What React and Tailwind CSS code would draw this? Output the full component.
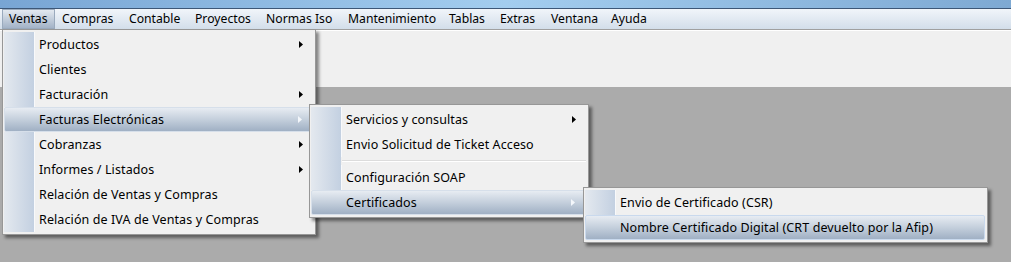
import React from "react";

const FONT = { fontFamily: '"Noto Sans", "Open Sans", sans-serif' };

function Arrow({ light }) {
  return (
    <svg width="4" height="7" viewBox="0 0 4 7" className="shrink-0">
      <path d="M0 0 L4 3.5 L0 7 Z" fill={light ? "#f4f7fb" : "#000"} />
    </svg>
  );
}

function Item({ label, arrow, hi, boxed }) {
  if (hi) {
    return (
      <div
        className={
          "relative flex h-[25px] items-center rounded-[2px] bg-gradient-to-b from-[#e7ecf2] via-[#c4cfdc] to-[#a0b0c4] " +
          (boxed ? "border border-[#c9d9ed]" : "border border-[#d6dfea]")
        }
      >
        <div className="w-[34px] shrink-0" />
        <span className="flex-1 whitespace-nowrap pt-[2px] text-black">{label}</span>
        <div className="flex w-[14px] shrink-0 justify-start">{arrow && <Arrow light />}</div>
      </div>
    );
  }
  return (
    <div className="flex h-[25px] items-center">
      <div className="h-full w-[30px] shrink-0 bg-gradient-to-r from-[#e4e9ef] to-[#c3d0e1]" />
      <div className="h-full w-px shrink-0 bg-[#f8f9fb]" />
      <div className="w-[4px] shrink-0" />
      <span className="flex-1 whitespace-nowrap pt-[2px] text-black">{label}</span>
      <div className="flex w-[14px] shrink-0 justify-start">{arrow && <Arrow />}</div>
    </div>
  );
}

function Separator() {
  return (
    <div className="flex h-[8px] items-stretch">
      <div className="h-full w-[30px] shrink-0 bg-gradient-to-r from-[#e4e9ef] to-[#c3d0e1]" />
      <div className="flex flex-1 flex-col justify-center pl-[1px]">
        <div className="h-px bg-[#dcdcdc]" />
        <div className="h-px bg-white" />
      </div>
    </div>
  );
}

function Menu({ className, children }) {
  return (
    <div
      className={
        "absolute border border-[#979797] bg-[#f0f0f0] p-[2px] pl-[1px] text-[12.5px] tracking-[0.1px] shadow-[3px_3px_3px_rgba(0,0,0,0.45)] " +
        className
      }
    >
      {children}
    </div>
  );
}

const bar = [
  ["Ventas", 53],
  ["Compras", 67],
  ["Contable", 66],
  ["Proyectos", 71],
  ["Normas Iso", 82],
  ["Mantenimiento", 101],
  ["Tablas", 51],
  ["Extras", 51],
  ["Ventana", 60],
  ["Ayuda", 60],
];

const widthClass = {
  53: "w-[53px]",
  67: "w-[67px]",
  66: "w-[66px]",
  71: "w-[71px]",
  82: "w-[82px]",
  101: "w-[101px]",
  51: "w-[51px]",
  60: "w-[60px]",
};

export default function App() {
  return (
    <div className="relative h-[262px] w-[1011px] overflow-hidden bg-[#ababab] text-[12px]" style={FONT}>
      {/* title strip */}
      <div className="h-[8px] bg-gradient-to-r from-[#78a5d4] via-[#a3cdef] to-[#7ea9d3]" />
      <div className="h-px bg-[#3d5777]" />
      {/* menu bar */}
      <div className="flex h-[20px] items-stretch bg-gradient-to-b from-[#f1f5fa] to-[#d3deea] pl-[2px] text-[12.2px]">
        {bar.map(([t, w], i) => (
          <div
            key={t}
            className={
              widthClass[w] +
              " flex items-center pl-[6px] pt-[1px] text-black " +
              (i === 0
                ? "mr-px border border-[#9aaabd] bg-gradient-to-b from-[#e3e9f0] to-[#a3b3c7] pl-[5px]"
                : "")
            }
          >
            {t}
          </div>
        ))}
      </div>
      <div className="h-px bg-[#a0a0a0]" />
      <div className="h-px bg-white" />
      {/* toolbar area */}
      <div className="h-[56px] bg-[#f0f0f0]" />

      {/* Ventas dropdown */}
      <Menu className="left-[2px] top-[29px] w-[314px]">
        <Item label="Productos" arrow />
        <Item label="Clientes" />
        <Item label="Facturación" arrow />
        <Item label="Facturas Electrónicas" arrow hi />
        <Item label="Cobranzas" arrow />
        <Item label="Informes / Listados" arrow />
        <Item label="Relación de Ventas y Compras" />
        <Item label="Relación de IVA de Ventas y Compras" />
      </Menu>

      {/* Facturas Electrónicas submenu */}
      <Menu className="left-[309px] top-[104px] w-[280px]">
        <Item label="Servicios y consultas" arrow />
        <Item label="Envio Solicitud de Ticket Acceso" />
        <Separator />
        <Item label="Configuración SOAP" />
        <Item label="Certificados" arrow hi />
      </Menu>

      {/* Certificados submenu */}
      <Menu className="left-[583px] top-[187px] w-[405px]">
        <Item label="Envio de Certificado (CSR)" />
        <Item label="Nombre Certificado Digital (CRT devuelto por la Afip)" hi boxed />
      </Menu>
    </div>
  );
}
